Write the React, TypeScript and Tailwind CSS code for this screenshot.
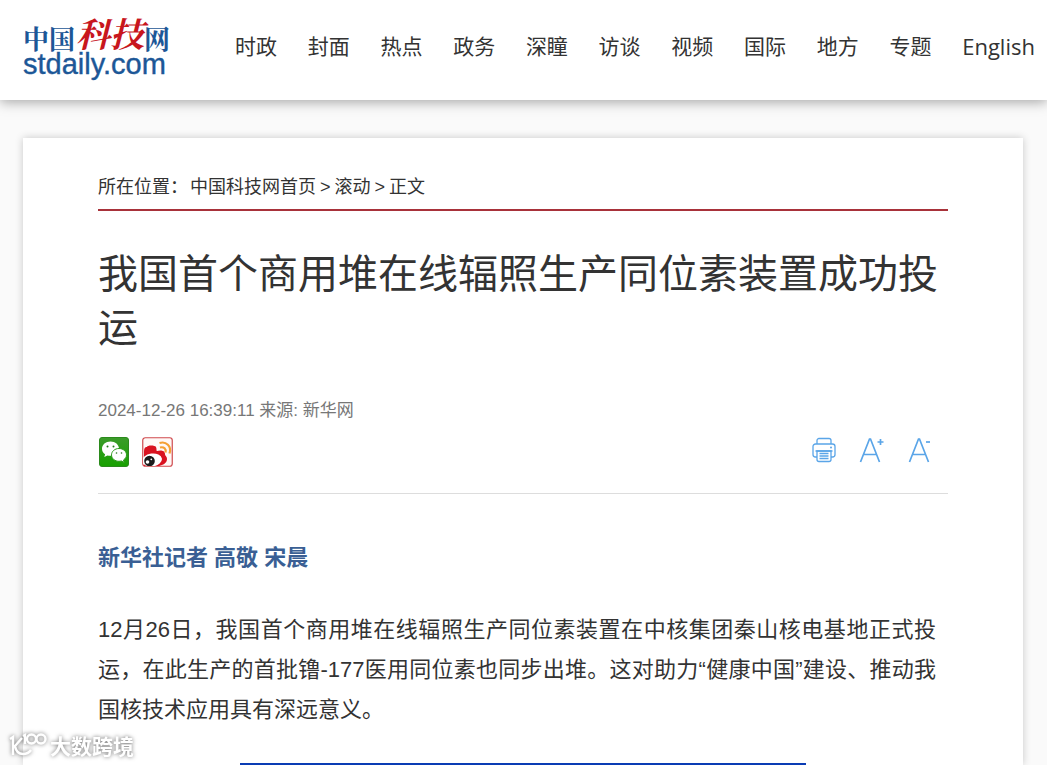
import { clsx } from "clsx";

const NAV_ITEMS = ["时政", "封面", "热点", "政务", "深瞳", "访谈", "视频", "国际", "地方", "专题", "English"];

const SANS = "font-['Liberation_Sans','Noto_Sans_CJK_SC',sans-serif]";

function Logo() {
  return (
    <a href="#" aria-label="中国科技网 stdaily.com" className="block w-[148px] shrink-0">
      <svg viewBox="0 0 148 72" className="block h-[72px] w-full overflow-visible">
        <g className="font-['Noto_Serif_CJK_SC','Noto_Sans_CJK_SC',serif] font-bold" fill="#1c5797">
          <text x="0" y="35" fontSize="26">中国</text>
          <text x="121" y="35" fontSize="26">网</text>
        </g>
        <text
          x="0"
          y="60"
          fontSize="29"
          fill="#1c5797"
          stroke="#1c5797"
          strokeWidth="0.4"
          className="font-['Liberation_Sans',sans-serif]"
        >
          stdaily.com
        </text>
        <g
          className="font-['Noto_Serif_CJK_SC','Noto_Sans_CJK_SC',serif] font-bold italic"
          fill="#c8161d"
        >
          <text x="53" y="33" fontSize="34">科</text>
          <text x="87" y="33" fontSize="34">技</text>
        </g>
      </svg>
    </a>
  );
}

function Header() {
  return (
    <header className="relative z-10 flex h-[100px] items-center bg-white pr-3 pl-[23px] shadow-[0_2px_12px_rgba(0,0,0,0.35)]">
      <Logo />
      <nav className="ml-16 flex flex-1 items-center justify-between pb-2 font-['Open_Sans','Noto_Sans_CJK_SC',sans-serif] text-[21px] leading-8 text-[#333]">
        {NAV_ITEMS.map((item) => (
          <a key={item} href="#" className={clsx("whitespace-nowrap", item === "English" && "text-[22px]")}>
            {item}
          </a>
        ))}
      </nav>
    </header>
  );
}

function WechatIcon() {
  return (
    <svg viewBox="0 0 30 30" className="size-[30px]">
      <defs>
        <linearGradient id="wechat" x1="0" y1="0" x2="0" y2="1">
          <stop offset="0" stopColor="#3c9b2b" />
          <stop offset="1" stopColor="#17a100" />
        </linearGradient>
      </defs>
      <rect x="0.5" y="0.5" width="29" height="29" rx="2.5" fill="url(#wechat)" stroke="#2b8a1c" />
      <path
        d="M11.5 4.5C6.700 4.500 3 7.700 3 11.700c0 2.300 1.200 4.200 3.100 5.500l-.8 2.800 3.100-1.600c1 .3 2 .4 3.100.4 4.800 0 8.500-3.100 8.500-7.100s-3.700-7.200-8.500-7.200z"
        fill="#fff"
      />
      <path
        d="M20 11.500c-4.200 0-7.500 2.900-7.500 6.400s3.300 6.400 7.500 6.400c.9 0 1.700-.1 2.500-.3l2.700 1.500-.7-2.500c1.800-1.200 3-3 3-5.100 0-3.500-3.300-6.400-7.500-6.400z"
        fill="#fff"
        stroke="#2b9a1a"
        strokeWidth="1"
      />
      <circle cx="8.500" cy="9.500" r="1" fill="#23791a" />
      <circle cx="14.500" cy="9.500" r="1" fill="#23791a" />
      <circle cx="17.500" cy="16" r="0.800" fill="#23791a" />
      <circle cx="22.500" cy="16" r="0.800" fill="#23791a" />
    </svg>
  );
}

function WeiboIcon() {
  return (
    <svg viewBox="0 0 31 30" className="h-[30px] w-[31px]">
      <defs>
        <clipPath id="weibo">
          <rect x="1" y="1" width="29" height="28" rx="2" />
        </clipPath>
      </defs>
      <rect x="0.750" y="0.750" width="29.500" height="28.500" rx="2.500" fill="#fff8f6" stroke="#cf4a4e" strokeWidth="1.200" />
      <g clipPath="url(#weibo)">
        <path
          d="M2 15c0-4 1-5 3-5 0-2 8-2 9 0 1 2 0 4 1 4 3-1 8-1 8 3 0 2 2 2 2 5 0 4-4 6-8 7H2z"
          fill="#d9121f"
        />
        <ellipse cx="10" cy="23" rx="10" ry="6.500" fill="#fff" transform="rotate(-8 10 23)" />
        <circle cx="7.500" cy="24" r="5.300" fill="#1b1b1b" />
        <circle cx="5.500" cy="25" r="1.800" fill="#fff" />
        <circle cx="9.300" cy="22.300" r="0.900" fill="#fff" />
      </g>
      <path d="M18 10.500c4-1 6.500 1.500 5.500 5" fill="none" stroke="#f5a033" strokeWidth="2.200" />
      <path d="M17.500 6C24 4 30 9 27.500 16.500" fill="none" stroke="#f5a033" strokeWidth="2.200" />
    </svg>
  );
}

function PrintIcon() {
  return (
    <svg viewBox="0 0 24 26" className="h-[26px] w-6" fill="none" stroke="#5aa5e8" strokeWidth="1.300">
      <path d="M5 7V3.500A2 2 0 0 1 7 1.500h10a2 2 0 0 1 2 2V7" />
      <path d="M5 20H3.500a2.500 2.500 0 0 1-2.500-2.500V9.500A2.500 2.500 0 0 1 3.500 7h17A2.500 2.500 0 0 1 23 9.500v8a2.500 2.500 0 0 1-2.500 2.500H19" />
      <path d="M5 14h14v8.500a2 2 0 0 1-2 2H7a2 2 0 0 1-2-2z" />
      <path d="M3.500 14h17M7.500 16.500h9M7.500 19h9M7.500 21.500h9" />
      <circle cx="19" cy="10.500" r="1" fill="#5aa5e8" stroke="none" />
    </svg>
  );
}

function FontSizeIcon({ larger }: { larger?: boolean }) {
  return (
    <svg viewBox="0 0 26 26" className="size-[26px]" fill="none" stroke="#5aa5e8" strokeWidth="1.700">
      <path d="M1.500 25 10.500 2h1L20.500 25M4.500 17.500h13" />
      <path d={larger ? "M18.500 5h6M21.500 2v6" : "M18 5h4"} />
    </svg>
  );
}

function ArticleTools() {
  return (
    <div className="mt-3 flex items-center justify-between pr-[14px] pl-px">
      <div className="flex gap-[13px]">
        <button type="button" aria-label="分享到微信">
          <WechatIcon />
        </button>
        <button type="button" aria-label="分享到微博">
          <WeiboIcon />
        </button>
      </div>
      <div className="flex gap-[23px] pb-1">
        <button type="button" aria-label="打印">
          <PrintIcon />
        </button>
        <button type="button" aria-label="放大字号">
          <FontSizeIcon larger />
        </button>
        <button type="button" aria-label="缩小字号">
          <FontSizeIcon />
        </button>
      </div>
    </div>
  );
}

function Watermark() {
  return (
    <div className="pointer-events-none absolute bottom-1.5 left-2 z-20 flex items-center gap-0.5 text-white drop-shadow-[0_0_2px_rgba(0,0,0,0.55)]">
      <svg viewBox="0 0 40 28" className="h-7 w-10" fill="none" stroke="currentColor" strokeWidth="2.400">
        <path d="M2 8l3-2v18M14 7 7 15c1 6 4 8 8 8 3 0 6-1 8-4" />
        <path d="M15 5l2-1v9" />
        <circle cx="23.500" cy="8" r="4.500" />
        <circle cx="33" cy="8" r="4.500" />
      </svg>
      <span className="font-['Noto_Sans_CJK_SC',sans-serif] text-[21px] leading-7 font-bold">大数跨境</span>
    </div>
  );
}

export default function App() {
  return (
    <div className={clsx("relative flex min-h-screen flex-col bg-[#fafafa] text-[#333]", SANS)}>
      <Header />

      <main className="mt-[38px] mr-6 ml-[23px] flex-1 bg-white px-[75px] pt-8 shadow-[0_0_8px_rgba(0,0,0,0.2)]">
        <div className="flex h-[41px] items-center border-b-2 border-[#a8323a] pb-1.5 text-[18px] leading-8">
          <span>所在位置：</span>
          <div className="ml-0.5 flex gap-1">
            <a href="#">中国科技网首页</a>
            <span>&gt;</span>
            <a href="#">滚动</a>
            <span>&gt;</span>
            <span>正文</span>
          </div>
        </div>

        <article>
          <h1 className="mt-9 text-[40px] leading-[54px]">我国首个商用堆在线辐照生产同位素装置成功投运</h1>
          <p className="mt-[42px] text-[17px] leading-7 text-[#777]">2024-12-26 16:39:11 来源: 新华网</p>
          <ArticleTools />

          <div className="mt-[26px] border-t border-[#ddd] pt-11 text-[22px] leading-10">
            <p className="font-bold text-[#3a5f94]">新华社记者 高敬 宋晨</p>
            <p className="mt-8 pr-3 text-justify">
              12月26日，我国首个商用堆在线辐照生产同位素装置在中核集团秦山核电基地正式投运，在此生产的首批镥-177医用同位素也同步出堆。这对助力“健康中国”建设、推动我国核技术应用具有深远意义。
            </p>
            <div className="mx-auto mt-[33px] h-0.5 w-2/3 bg-[#0a3cb4]" />
          </div>
        </article>
      </main>

      <Watermark />
    </div>
  );
}
